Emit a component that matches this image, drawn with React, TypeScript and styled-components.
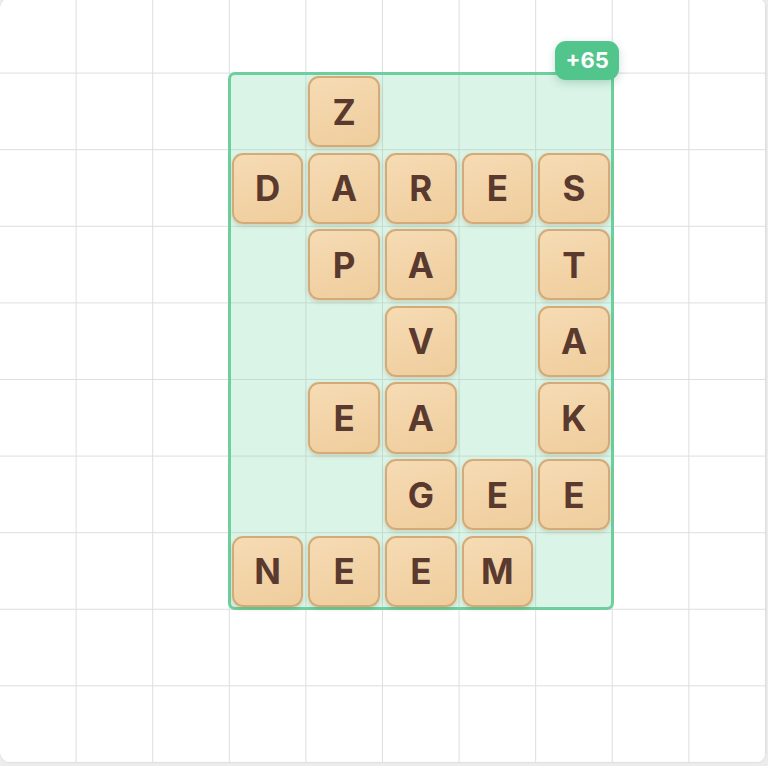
import React from "react";
import styled, { createGlobalStyle } from "styled-components";

const CELL = 76.6;

const Global = createGlobalStyle`
  html, body { margin: 0; padding: 0; background: #ececec; overflow: hidden; }
  body { font-family: Inter, "Noto Sans", "Liberation Sans", sans-serif; }
`;

const Board = styled.div`
  position: relative;
  box-sizing: border-box;
  width: 766px;
  height: 766px;
  margin-top: -3px;
  background-color: #ffffff;
  background-image:
    linear-gradient(to right, transparent calc(100% - 1px), #dedede calc(100% - 1px)),
    linear-gradient(to bottom, transparent calc(100% - 1px), #dedede calc(100% - 1px));
  background-size: ${CELL}px ${CELL}px;
  border-radius: 12px;
  box-shadow: 0 0 0 1px #e6e6e6;
  display: grid;
  grid-template-columns: repeat(10, ${CELL}px);
  grid-template-rows: repeat(10, ${CELL}px);
  overflow: hidden;
`;

const Highlight = styled.div<{ $c1: number; $c2: number; $r1: number; $r2: number }>`
  grid-column: ${(p) => p.$c1} / ${(p) => p.$c2};
  grid-row: ${(p) => p.$r1} / ${(p) => p.$r2};
  margin: -2px -1px 0 -2px;
  box-sizing: border-box;
  background: rgba(120, 214, 166, 0.27);
  border: 3px solid #6dcf9e;
  border-radius: 7px;
  position: relative;
  z-index: 1;
`;

const Badge = styled.div`
  position: absolute;
  top: -34px;
  right: -8px;
  height: 39px;
  padding: 0 10px;
  display: flex;
  align-items: center;
  background: #52c58c;
  color: #ffffff;
  font-weight: 700;
  font-size: 22px;
  border-radius: 11px;
  box-shadow: 0 3px 8px rgba(40, 120, 80, 0.25);
`;

const Tile = styled.div<{ $c: number; $r: number }>`
  grid-column: ${(p) => p.$c + 1};
  grid-row: ${(p) => p.$r + 1};
  z-index: 2;
  margin: 2.5px 3px 3px 2px;
  box-sizing: border-box;
  border: 2px solid #d4ab78;
  border-radius: 11px;
  background: linear-gradient(160deg, #f6dbb4 0%, #efcd9c 100%);
  box-shadow: 0 2px 4px rgba(120, 80, 30, 0.2);
  display: flex;
  align-items: center;
  justify-content: center;
  color: #5a3a2e;
  font-size: 35px;
  font-weight: 700;
`;

const tiles: [string, number, number][] = [
  ["Z", 4, 1],
  ["D", 3, 2], ["A", 4, 2], ["R", 5, 2], ["E", 6, 2], ["S", 7, 2],
  ["P", 4, 3], ["A", 5, 3], ["T", 7, 3],
  ["V", 5, 4], ["A", 7, 4],
  ["E", 4, 5], ["A", 5, 5], ["K", 7, 5],
  ["G", 5, 6], ["E", 6, 6], ["E", 7, 6],
  ["N", 3, 7], ["E", 4, 7], ["E", 5, 7], ["M", 6, 7],
];

export default function App() {
  return (
    <>
      <Global />
      <Board>
        <Highlight $c1={4} $c2={9} $r1={2} $r2={9}>
          <Badge>+65</Badge>
        </Highlight>
        {tiles.map(([l, c, r], i) => (
          <Tile key={i} $c={c} $r={r}>
            {l}
          </Tile>
        ))}
      </Board>
    </>
  );
}
